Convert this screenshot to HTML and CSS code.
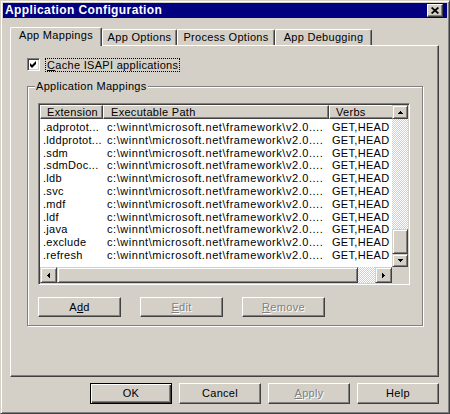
FILE: index.html
```html
<!DOCTYPE html>
<html>
<head>
<meta charset="utf-8">
<title>Application Configuration</title>
<link rel="stylesheet" href="styles.css">
</head>
<body>
<div class="window">
  <div class="titlebar">
    <span class="title">Application Configuration</span>
    <span class="close"><svg width="8" height="7" viewBox="0 0 8 7"><path d="M0.6 0.5 L7.4 6.5 M7.4 0.5 L0.6 6.5" stroke="#000" stroke-width="1.7"/></svg></span>
  </div>
  <div class="tabs">
    <div class="tab active w1">App Mappings</div>
    <div class="tab w2">App Options</div>
    <div class="tab w3">Process Options</div>
    <div class="tab w4">App Debugging</div>
  </div>
  <div class="panel">
    <div class="checkrow">
      <span class="checkbox"><svg width="7" height="7" viewBox="0 0 7 7"><path d="M0 2 L2 4 L6 0 L6 3 L2 7 L0 5 Z" fill="#000"/></svg></span>
      <span class="checklabel"><u>C</u>ache ISAPI applications</span>
    </div>
    <fieldset class="group">
      <legend>Application Mappings</legend>
      <div class="listview">
        <div class="lv-main">
          <div class="lv-content">
            <div class="lv-header">
              <div class="hd col1">Extension</div>
              <div class="hd col2">Executable Path</div>
              <div class="hd col3">Verbs</div>
            </div>
            <div class="lv-rows">
              <div class="row"><span class="c1">.adprotot...</span><span class="c2">c:\winnt\microsoft.net\framework\v2.0....</span><span class="c3">GET,HEAD</span></div>
              <div class="row"><span class="c1">.lddprotot...</span><span class="c2">c:\winnt\microsoft.net\framework\v2.0....</span><span class="c3">GET,HEAD</span></div>
              <div class="row"><span class="c1">.sdm</span><span class="c2">c:\winnt\microsoft.net\framework\v2.0....</span><span class="c3">GET,HEAD</span></div>
              <div class="row"><span class="c1">.sdmDoc...</span><span class="c2">c:\winnt\microsoft.net\framework\v2.0....</span><span class="c3">GET,HEAD</span></div>
              <div class="row"><span class="c1">.ldb</span><span class="c2">c:\winnt\microsoft.net\framework\v2.0....</span><span class="c3">GET,HEAD</span></div>
              <div class="row"><span class="c1">.svc</span><span class="c2">c:\winnt\microsoft.net\framework\v2.0....</span><span class="c3">GET,HEAD</span></div>
              <div class="row"><span class="c1">.mdf</span><span class="c2">c:\winnt\microsoft.net\framework\v2.0....</span><span class="c3">GET,HEAD</span></div>
              <div class="row"><span class="c1">.ldf</span><span class="c2">c:\winnt\microsoft.net\framework\v2.0....</span><span class="c3">GET,HEAD</span></div>
              <div class="row"><span class="c1">.java</span><span class="c2">c:\winnt\microsoft.net\framework\v2.0....</span><span class="c3">GET,HEAD</span></div>
              <div class="row"><span class="c1">.exclude</span><span class="c2">c:\winnt\microsoft.net\framework\v2.0....</span><span class="c3">GET,HEAD</span></div>
              <div class="row"><span class="c1">.refresh</span><span class="c2">c:\winnt\microsoft.net\framework\v2.0....</span><span class="c3">GET,HEAD</span></div>
            </div>
          </div>
          <div class="vscroll">
            <div class="sbtn up"><svg width="5" height="3" viewBox="0 0 5 3"><rect x="2" y="0" width="1" height="1"/><rect x="1" y="1" width="3" height="1"/><rect x="0" y="2" width="5" height="1"/></svg></div>
            <div class="track"></div>
            <div class="thumb-v"></div>
            <div class="sbtn down"><svg width="5" height="3" viewBox="0 0 5 3"><rect x="0" y="0" width="5" height="1"/><rect x="1" y="1" width="3" height="1"/><rect x="2" y="2" width="1" height="1"/></svg></div>
          </div>
        </div>
        <div class="lv-bottom">
          <div class="hscroll">
            <div class="sbtn side"><svg width="3" height="5" viewBox="0 0 3 5"><rect x="0" y="2" width="1" height="1"/><rect x="1" y="1" width="1" height="3"/><rect x="2" y="0" width="1" height="5"/></svg></div>
            <div class="thumb-h"></div>
            <div class="track"></div>
            <div class="sbtn side"><svg width="3" height="5" viewBox="0 0 3 5"><rect x="0" y="0" width="1" height="5"/><rect x="1" y="1" width="1" height="3"/><rect x="2" y="2" width="1" height="1"/></svg></div>
          </div>
          <div class="corner"></div>
        </div>
      </div>
      <div class="btnrow">
        <button class="btn small">A<u>d</u>d</button>
        <button class="btn small" disabled><u>E</u>dit</button>
        <button class="btn small" disabled><u>R</u>emove</button>
      </div>
    </fieldset>
  </div>
  <div class="footer">
    <button class="btn big default">OK</button>
    <button class="btn big">Cancel</button>
    <button class="btn big" disabled><u>A</u>pply</button>
    <button class="btn big">Help</button>
  </div>
</div>
</body>
</html>
```

FILE: styles.css
```css
* { box-sizing: border-box; }
html, body { margin: 0; padding: 0; }
body {
  width: 450px;
  height: 414px;
  overflow: hidden;
  background: #d4d0c8;
  color: #000;
  font-family: "Liberation Sans", Arial, sans-serif;
  font-size: 11px;
  line-height: 13px;
  letter-spacing: 0.3px;
}

.window {
  width: 450px;
  height: 414px;
  background: #d4d0c8;
  border: 1px solid;
  border-color: #d4d0c8 #404040 #404040 #d4d0c8;
  box-shadow: inset 1px 1px #fff, inset -1px -1px #808080;
  padding: 2px;
  display: flex;
  flex-direction: column;
}

/* title bar */
.titlebar {
  height: 15px;
  background: #000080;
  color: #fff;
  display: flex;
  align-items: center;
  padding: 0 4px 0 2px;
  flex: none;
}
.title {
  flex: 1;
  font-weight: bold;
  font-size: 12px;
  letter-spacing: 0.4px;
  white-space: nowrap;
}
.close {
  width: 16px;
  height: 13px;
  background: #d4d0c8;
  border: 1px solid;
  border-color: #fff #404040 #404040 #fff;
  box-shadow: inset -1px -1px #808080;
  display: flex;
  align-items: center;
  justify-content: center;
  padding-bottom: 1px;
}
.close svg { display: block; }

/* tabs */
.tabs {
  height: 18px;
  margin: 9px 0 0 7px;
  display: flex;
  align-items: flex-end;
  flex: none;
}
.tab {
  height: 16px;
  border: 1px solid;
  border-color: #fff #404040 transparent #fff;
  border-bottom: none;
  border-radius: 2px 2px 0 0;
  box-shadow: inset -1px 0 #808080;
  background: #d4d0c8;
  padding-top: 1px;
  text-align: center;
  white-space: nowrap;
  flex: none;
}
.tab.active {
  height: 19px;
  margin-bottom: -1px;
  position: relative;
  z-index: 1;
}
.w1 { width: 92px; }
.w2 { width: 75px; }
.w3 { width: 98px; }
.w4 { width: 97px; }

/* panel */
.panel {
  width: 429px;
  height: 332px;
  margin-left: 7px;
  border: 1px solid;
  border-color: #fff #404040 #404040 #fff;
  box-shadow: inset -1px -1px #808080;
  padding: 12px 0 0 16px;
  flex: none;
}

.checkrow {
  display: flex;
  align-items: flex-start;
  height: 14px;
}
.checkbox {
  width: 13px;
  height: 13px;
  background: #fff;
  border: 1px solid;
  border-color: #808080 #fff #fff #808080;
  box-shadow: inset 1px 1px #404040, inset -1px -1px #d4d0c8;
  display: flex;
  align-items: center;
  justify-content: center;
  flex: none;
}
.checkbox svg { display: block; }
.checklabel {
  margin-left: 5px;
  height: 14px;
  line-height: 12px;
  padding: 0 1px;
  border: 1px dotted #000;
  white-space: nowrap;
}

/* group box */
.group {
  width: 396px;
  min-width: 0;
  margin: 8px 0 0 0;
  padding: 10px 12px 8px 10px;
  border: 1px solid #808080;
  box-shadow: inset 1px 1px #fff, 1px 1px #fff;
}
.group legend {
  padding: 0 1px;
  margin-left: -3px;
  line-height: 13px;
  background: #d4d0c8;
}

/* list view */
.listview {
  width: 372px;
  height: 182px;
  background: #fff;
  border: 1px solid;
  border-color: #808080 #fff #fff #808080;
  box-shadow: inset 1px 1px #404040, inset -1px -1px #d4d0c8;
  padding: 1px;
  display: flex;
  flex-direction: column;
}
.lv-main {
  height: 162px;
  display: flex;
  flex: none;
}
.lv-content {
  flex: 1;
  min-width: 0;
  overflow: hidden;
}
.lv-header {
  display: flex;
  height: 14px;
  width: 400px;
}
.hd {
  height: 14px;
  line-height: 12px;
  background: #d4d0c8;
  border: 1px solid;
  border-color: #fff #404040 #404040 #fff;
  box-shadow: inset -1px -1px #808080;
  white-space: nowrap;
  overflow: hidden;
  flex: none;
}
.hd.col1 { width: 63px; padding-left: 6px; }
.hd.col2 { width: 226px; padding-left: 7px; }
.hd.col3 { width: 80px; padding-left: 6px; }

.lv-rows { padding-top: 2px; }
.row {
  display: flex;
  height: 12.8px;
  line-height: 12.8px;
  white-space: nowrap;
}
.row span { flex: none; overflow: hidden; }
.c1 { width: 63px; padding-left: 3px; }
.c2 { width: 226px; padding-left: 4px; letter-spacing: 0.55px; }
.c3 { width: 80px; padding-left: 3px; }

/* scrollbars */
.vscroll {
  width: 16px;
  flex: none;
  display: flex;
  flex-direction: column;
}
.sbtn {
  background: #d4d0c8;
  border: 1px solid;
  border-color: #d4d0c8 #404040 #404040 #d4d0c8;
  box-shadow: inset 1px 1px #fff, inset -1px -1px #808080;
  display: flex;
  align-items: center;
  justify-content: center;
  flex: none;
}
.sbtn svg { display: block; fill: #000; }
.sbtn.up { height: 14px; }
.sbtn.down { height: 13px; }
.sbtn.side { width: 17px; height: 16px; }
.track {
  flex: 1;
  background: repeating-conic-gradient(#fff 0 25%, #d4d0c8 0 50%) 0 0 / 2px 2px;
}
.thumb-v {
  height: 25px;
  flex: none;
  background: #d4d0c8;
  border: 1px solid;
  border-color: #d4d0c8 #404040 #404040 #d4d0c8;
  box-shadow: inset 1px 1px #fff, inset -1px -1px #808080;
}
.lv-bottom {
  height: 16px;
  display: flex;
  flex: none;
}
.hscroll {
  flex: 1;
  display: flex;
}
.thumb-h {
  width: 301px;
  flex: none;
  background: #d4d0c8;
  border: 1px solid;
  border-color: #d4d0c8 #404040 #404040 #d4d0c8;
  box-shadow: inset 1px 1px #fff, inset -1px -1px #808080;
}
.corner {
  width: 16px;
  background: #d4d0c8;
  flex: none;
}

/* buttons */
.btnrow {
  display: flex;
  gap: 19px;
  margin-top: 12px;
}
.btn {
  font: inherit;
  letter-spacing: inherit;
  color: #000;
  background: #d4d0c8;
  border: 1px solid;
  border-color: #fff #404040 #404040 #fff;
  box-shadow: inset -1px -1px #808080;
  padding: 0;
  margin: 0;
  text-align: center;
  flex: none;
}
.btn.small { width: 83px; height: 20px; line-height: 18px; }
.btn.big { width: 82px; height: 21px; line-height: 19px; }
.btn:disabled {
  color: #808080;
  text-shadow: 1px 1px #fff;
}
.btn.default {
  border-color: #000;
  box-shadow: inset 1px 1px #fff, inset -1px -1px #404040, inset -2px -2px #808080;
}

.footer {
  display: flex;
  justify-content: flex-end;
  gap: 7px;
  margin-top: 6px;
  padding-right: 8px;
  flex: none;
}
```
